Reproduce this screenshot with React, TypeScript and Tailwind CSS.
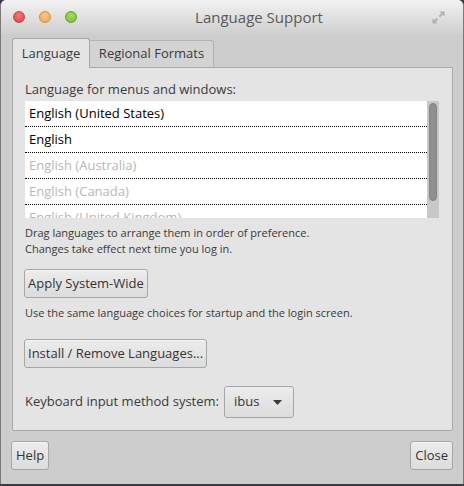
export default function App() {
  const langs = [
    { name: 'English (United States)', on: true },
    { name: 'English', on: true },
    { name: 'English (Australia)', on: false },
    { name: 'English (Canada)', on: false },
    { name: 'English (United Kingdom)', on: false },
  ]

  const btn =
    'h-[29px] flex items-center rounded-[3px] border border-[#a6a6a6] bg-gradient-to-b from-[#ececec] to-[#dcdcdc] text-[13px] text-[#333] shadow-[inset_0_1px_0_#f6f6f6]'

  return (
    <div
      className="w-[464px] h-[486px] bg-[#3a3a44] overflow-hidden"
      style={{ fontFamily: '"Open Sans", "Noto Sans", sans-serif' }}
    >
      <div className="w-full h-[484px] flex flex-col rounded-t-[6px] bg-[#cdcdcd] border-l border-r border-[#7a7a7a] overflow-hidden">
        {/* title bar */}
        <div className="h-[34px] shrink-0 flex items-center bg-gradient-to-b from-[#f2f2f2] to-[#cfcfcf] pl-[12px] pr-[17px]">
          <div className="flex items-center gap-[14px]">
            <span className="w-[12px] h-[12px] rounded-full bg-[radial-gradient(circle_at_50%_35%,#f87a7a,#e0393d)] border border-[#c9454a]" />
            <span className="w-[12px] h-[12px] rounded-full bg-[radial-gradient(circle_at_50%_35%,#fcc88a,#f2a04a)] border border-[#d78f45]" />
            <span className="w-[12px] h-[12px] rounded-full bg-[radial-gradient(circle_at_50%_35%,#a6dd5e,#76bc2c)] border border-[#6aa42d]" />
          </div>
          <div className="flex-1 text-center pl-[10px] text-[15px] text-[#5a5a5a]">Language Support</div>
          <svg width="15" height="15" viewBox="0 0 15 15" className="text-[#b0b0b0]">
            <path d="M8.5 1.5h5v5l-1.8-1.8-2.6 2.6-1.4-1.4 2.6-2.6z" fill="currentColor" />
            <path d="M6.5 13.5h-5v-5l1.8 1.8 2.6-2.6 1.4 1.4-2.6 2.6z" fill="currentColor" />
          </svg>
        </div>

        {/* body */}
        <div className="flex-1 flex flex-col pl-[11px] pr-[10px] pt-[4px]">
          {/* tabs */}
          <div className="flex items-end h-[29px]">
            <div className="h-[30px] w-[78px] flex items-center justify-center bg-[#e4e4e4] border border-b-0 border-[#a8a8a8] rounded-t-[3px] text-[13px] text-[#3a3a3a] relative z-10 -mb-px">
              Language
            </div>
            <div className="h-[27px] w-[124px] flex items-center justify-center bg-[#d3d3d3] border border-l-0 border-b-0 border-[#b2b2b2] rounded-tr-[3px] text-[13px] text-[#3a3a3a]">
              Regional Formats
            </div>
          </div>

          {/* panel */}
          <div className="h-[364px] bg-[#e4e4e4] border border-[#a8a8a8] rounded-b-[2px] pl-[12px] pr-[13px] pt-[12px] flex flex-col">
            <div className="text-[13px] leading-[19px] text-[#3a3a3a]">Language for menus and windows:</div>
            <div className="flex h-[117px] mt-[2px]">
              <div className="flex-1 bg-white overflow-hidden">
                {langs.map((l) => (
                  <div
                    key={l.name}
                    className={`h-[26px] flex items-center pl-[4px] text-[13px] border-b border-dotted border-black ${l.on ? 'text-black' : 'text-[#b8b8b8]'}`}
                  >
                    {l.name}
                  </div>
                ))}
              </div>
              <div className="w-[12px] bg-[#c8c8c8] flex justify-center pt-[2px]">
                <div className="w-[8px] h-[98px] rounded-[4px] bg-[#8f8f8f] border border-[#858585]" />
              </div>
            </div>
            <div className="mt-[7px] text-[11px] leading-[16px] text-[#3a3a3a]">
              <div>Drag languages to arrange them in order of preference.</div>
              <div>Changes take effect next time you log in.</div>
            </div>
            <div className="mt-[12px] flex -ml-px">
              <button className={`${btn} px-[3px]`}>Apply System-Wide</button>
            </div>
            <div className="mt-[7px] text-[11px] leading-[16px] text-[#3a3a3a]">
              Use the same language choices for startup and the login screen.
            </div>
            <div className="mt-[18px] flex -ml-px">
              <button className={`${btn} px-[3px]`}>Install / Remove Languages...</button>
            </div>
            <div className="mt-[18px] flex items-center gap-[5px]">
              <span className="text-[13px] text-[#3a3a3a]">Keyboard input method system:</span>
              <button className="h-[32px] w-[70px] flex items-center justify-between pl-[9px] pr-[11px] rounded-[3px] border border-[#a6a6a6] bg-gradient-to-b from-[#ececec] to-[#dcdcdc] text-[13px] text-[#333]">
                <span>ibus</span>
                <svg width="9" height="5" viewBox="0 0 9 5">
                  <path d="M0 0h9L4.5 5z" fill="#3a3a3a" />
                </svg>
              </button>
            </div>
          </div>

          {/* footer */}
          <div className="flex justify-between mt-[10px] -ml-px">
            <button className={`${btn} px-[4px]`}>Help</button>
            <button className={`${btn} px-[4px]`}>Close</button>
          </div>
        </div>
      </div>
    </div>
  )
}
